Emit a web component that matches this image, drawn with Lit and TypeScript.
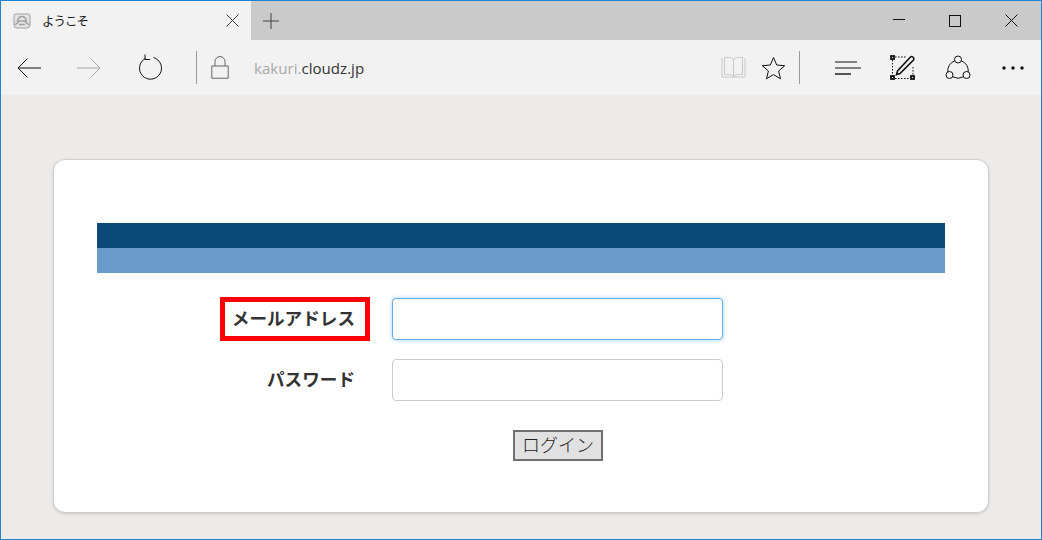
import { LitElement, html, css } from "lit";
import { customElement } from "lit/decorators.js";

@customElement("app-root")
export class AppRoot extends LitElement {
  static styles = css`
    :host { display: block; width: 1042px; height: 540px; box-sizing: border-box; border: 1px solid #1b82d4; overflow: hidden; background: #ecebea; font-family: "Noto Sans CJK JP", "Noto Sans", sans-serif; }
    svg { display: block; fill: none; stroke: #111; stroke-width: 1; overflow: visible; flex: none; }
    .tabbar { display: flex; height: 39px; background: #cacaca; }
    .tab { width: 250px; background: #f2f2f2; display: flex; align-items: center; padding-left: 12px; box-sizing: border-box; }
    .tab-title { font-size: 12.5px; letter-spacing: -1px; color: #1a1a1a; margin-left: 11px; width: 184px; line-height: 16px; }
    .new { width: 40px; display: flex; justify-content: center; align-items: center; }
    .spacer { flex: 1; }
    .winbtn { width: 56px; display: flex; justify-content: center; align-items: center; }
    .winbtn.close { width: 58px; padding-right: 2px; box-sizing: border-box; }
    .toolbar { height: 55px; background: #f2f2f2; display: flex; align-items: center; }
    .nav { display: flex; justify-content: center; flex: none; }
    .back { width: 56px; }
    .forward { width: 64px; }
    .reload { width: 57px; }
    .sep { width: 1px; height: 33px; background: #9a9a9a; flex: none; }
    .sep-a { margin-left: 18px; }
    .sep-b { margin-left: 13px; }
    .lock { margin-left: 14px; }
    .url { font-family: "Open Sans", "Noto Sans", sans-serif; font-size: 15.1px; margin-left: 25px; color: #a8a8a8; width: 467px; flex: none; }
    .url b { font-weight: 400; color: #333; }
    .tools { display: flex; align-items: center; }
    .star { margin-left: 15px; }
    .lines { margin-left: 35px; }
    .note { margin-left: 29px; }
    .share { margin-left: 30px; }
    .dots { margin-left: 31px; stroke: none; fill: #111; }
    .page { height: 444px; padding: 64px 52px 0; box-sizing: border-box; }
    .card { height: 354px; box-sizing: border-box; background: #fff; border: 1px solid #cfcfcf; border-radius: 12px; box-shadow: 0 1px 3px rgba(0,0,0,.14); padding: 63px 43px 0; }
    .bar1 { height: 25px; background: #0a4978; }
    .bar2 { height: 25px; background: #689bca; }
    .row { display: flex; align-items: center; height: 44px; }
    .r1 { margin-top: 24px; }
    .r2 { margin-top: 17px; }
    .label { width: 295px; text-align: right; padding-right: 37px; margin-bottom: 2px; box-sizing: border-box; font-weight: 700; font-size: 17.6px; color: #333; line-height: 24px; flex: none; position: relative; }
    .highlight { position: absolute; right: 22px; top: -9px; width: 150px; height: 44px; box-sizing: border-box; border: 5px solid #f00; }
    input { width: 331px; height: 42px; box-sizing: border-box; border: 1px solid #ccc; border-radius: 4px; background: #fff; margin: 0; padding: 0; outline: none; flex: none; }
    .focus { border-color: #66afe9; box-shadow: 0 0 4px rgba(102,175,233,.6); }
    .actions { display: flex; margin-top: 28px; padding-left: 416px; }
    button { width: 90px; height: 31px; box-sizing: border-box; border: 2px solid #707070; background: #e1e1e1; padding: 0 0 3px; font-family: "Noto Sans CJK JP", sans-serif; font-size: 18px; font-weight: 300; color: #222; line-height: 24px; }
  `;

  render() {
    return html`
      <div class="tabbar">
        <div class="tab">
          <svg width="18" height="18" viewBox="0 0 18 18" stroke-width="1.4" style="stroke:#a0a0a0">
            <path d="M3 2h12a2 2 0 0 1 2 2v9a3 3 0 0 1-3 3H4a3 3 0 0 1-3-3V4a2 2 0 0 1 2-2z" fill="#e4e4e4" />
            <path d="M4.500 9.500C5 6 6.500 4.500 9 4.500s4 1.500 4.500 5M2 13l4.500-4h5L16 13M6 12.500h6" stroke-width="1.600" />
          </svg>
          <span class="tab-title">ようこそ</span>
          <svg width="13" height="13" viewBox="0 0 13 13" style="stroke:#404040"><path d="M.5.500l12 12M12.500.500l-12 12" /></svg>
        </div>
        <div class="new">
          <svg width="16" height="16" viewBox="0 0 16 16" style="stroke:#404040"><path d="M8 0v16M0 8h16" /></svg>
        </div>
        <div class="spacer"></div>
        <div class="winbtn"><svg width="12" height="1" viewBox="0 0 12 1" style="margin-bottom:2px"><path d="M0 .5h12" /></svg></div>
        <div class="winbtn"><svg width="12" height="12" viewBox="0 0 12 12"><rect x=".5" y=".5" width="11" height="11" /></svg></div>
        <div class="winbtn close"><svg width="13" height="13" viewBox="0 0 13 13"><path d="M.5.500l12 12M12.500.500l-12 12" /></svg></div>
      </div>

      <div class="toolbar">
        <div class="nav back">
          <svg width="24" height="20" viewBox="0 0 24 20" stroke-width="1.600"><path d="M24 10H1M10.500 .5L1 10l9.500 9.500" /></svg>
        </div>
        <div class="nav forward">
          <svg width="24" height="20" viewBox="0 0 24 20" stroke-width="1.500" style="stroke:#a6a6a6"><path d="M0 10h23M13.500 .5L23 10l-9.500 9.500" /></svg>
        </div>
        <div class="nav reload">
          <svg width="24" height="24" viewBox="0 0 24 24" stroke-width="1.700"><path d="M7.500 2.400A11 11 0 1 0 15.500 1.600M7 -1.500v5h5" /></svg>
        </div>
        <div class="sep sep-a"></div>
        <svg class="lock" width="18" height="23" viewBox="0 0 18 23" style="stroke:#666" stroke-width="1.500"><rect x=".8" y="10" width="16.400" height="12.200" /><path d="M4 10V5.500a5 5 0 0 1 10 0V10" /></svg>
        <div class="url">kakuri.<b>cloudz.jp</b></div>
        <div class="tools">
          <svg width="25" height="23" viewBox="0 0 25 23" style="stroke:#c8c8c8" stroke-width="1.700"><path d="M1 2v19h23V2M3.500 18.500V1.500c4-.5 7 0 9 2 2-2 5-2.500 9-2v17c-4-.5-7 0-9 2-2-2-5-2.500-9-2zM12.500 3.500v17" /></svg>
          <svg class="star" width="25" height="24" viewBox="0 0 25 24" stroke-width="1.900"><path d="M12.500 1.500l3.200 7.500 8 .7-6.100 5.300 1.900 7.800-7-4.200-7 4.200 1.900-7.800L1.300 9.700l8-.7z" /></svg>
          <div class="sep sep-b"></div>
          <svg class="lines" width="26" height="14" viewBox="0 0 26 14" stroke-width="1.500"><path d="M0 1h22M0 7h26" /><path d="M0 13h16" stroke-width="1.800" style="stroke:#444" /></svg>
          <svg class="note" width="25" height="25" viewBox="0 0 25 25" stroke-width="1.400">
            <path d="M5 2h12M2.500 5v16M5 23.500h15M23 12v9" stroke-dasharray="1.500 1.500" />
            <rect x="1" y="1" width="3" height="3" stroke-width="1.800" /><rect x="1" y="21" width="3" height="3" stroke-width="1.800" /><rect x="21" y="21" width="3" height="3" stroke-width="1.800" />
            <path d="M7.500 16l-1 3.500 3.500-1L23.500 5c.6-.7.6-1.500 0-2.200l-.8-.8c-.7-.6-1.500-.6-2.200 0z" stroke-width="1.600" />
          </svg>
          <svg class="share" width="26" height="26" viewBox="0 0 26 26" stroke-width="1.600">
            <circle cx="13" cy="4.500" r="3.500" /><circle cx="4.500" cy="20" r="3.500" /><circle cx="21.500" cy="20" r="3.500" />
            <path d="M9.800 5.800A10.500 10.500 0 0 0 2.800 17M16.200 5.800A10.500 10.500 0 0 1 23.200 17M7.800 21.800a10.500 10.500 0 0 0 10.400 0" />
          </svg>
          <svg class="dots" width="22" height="4" viewBox="0 0 22 4"><circle cx="2" cy="2" r="1.700" /><circle cx="11" cy="2" r="1.700" /><circle cx="20" cy="2" r="1.700" /></svg>
        </div>
      </div>

      <div class="page">
        <div class="card">
          <div class="bar1"></div>
          <div class="bar2"></div>
          <div class="row r1">
            <div class="label">メールアドレス<span class="highlight"></span></div>
            <input class="focus" type="text" />
          </div>
          <div class="row r2">
            <div class="label">パスワード</div>
            <input type="password" />
          </div>
          <div class="actions"><button>ログイン</button></div>
        </div>
      </div>
    `;
  }
}
